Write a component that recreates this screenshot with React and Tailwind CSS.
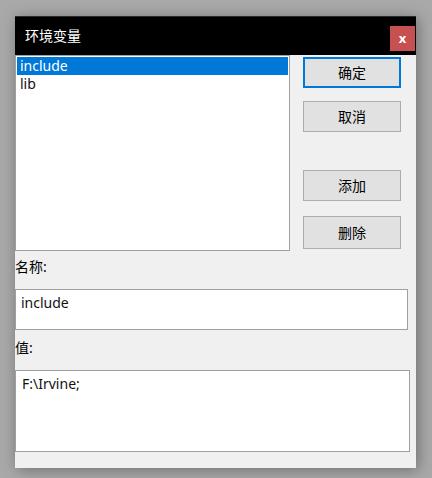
import React from 'react';

const font = { fontFamily: '"Noto Sans", "Noto Sans CJK SC", sans-serif' };

const Btn = ({ label, primary, className = '' }) => (
  <button
    className={`w-[98px] h-[31px] bg-[#e1e1e1] text-[14px] text-black flex items-center justify-center ${
      primary ? 'border-2 border-[#0078d7]' : 'border border-[#adadad]'
    } ${className}`}
  >
    {label}
  </button>
);

export default function App() {
  return (
    <div
      className="w-[432px] h-[478px] bg-[#a9a9a9] pt-4 pl-[15px] overflow-hidden"
      style={font}
    >
      <div className="w-[401px] h-[452px] flex flex-col shadow-[2px_2px_14px_rgba(0,0,0,0.35)]">
        {/* Title bar */}
        <div className="h-[39px] bg-black border-t border-[#2b2b2b] flex items-start justify-between">
          <span className="text-white text-[14px] pl-[10px] pt-[9px] leading-[20px]">环境变量</span>
          <button className="w-[25px] h-[25px] mt-[9px] mr-px bg-[#c75050] text-white text-[13px] font-bold leading-none flex items-center justify-center">
            x
          </button>
        </div>

        {/* Body */}
        <div className="flex-1 bg-[#f0f0f0] flex flex-col">
          <div className="flex">
            <div className="w-[275px] h-[196px] bg-white border border-[#a0a0a0] p-px">
              <div className="h-[18px] bg-[#0078d7] text-white text-[14px] leading-[18px] pl-[3px]">include</div>
              <div className="h-[18px] text-[#111] text-[14px] leading-[18px] pl-[3px]">lib</div>
            </div>
            <div className="ml-[13px] pt-[2px] flex flex-col">
              <Btn label="确定" primary className="h-[30px]" />
              <Btn label="取消" className="mt-[13px]" />
              <Btn label="添加" className="mt-[38px]" />
              <Btn label="删除" className="mt-[15px] h-[33px]" />
            </div>
          </div>

          <div className="text-[14px] text-black leading-[20px] mt-[6px]">名称:</div>
          <div className="w-[393px] h-[41px] mt-[12px] bg-white border border-[#a0a0a0] text-[14px] text-[#111] pl-[5px] pt-[3px] leading-[20px]">
            include
          </div>

          <div className="text-[14px] text-black leading-[20px] mt-[8px]">值:</div>
          <div className="w-[395px] h-[82px] mt-[12px] bg-white border border-[#a0a0a0] text-[14px] text-[#111] pl-[6px] pt-[3px] leading-[20px]">
            F:\Irvine;
          </div>
        </div>
      </div>
    </div>
  );
}
